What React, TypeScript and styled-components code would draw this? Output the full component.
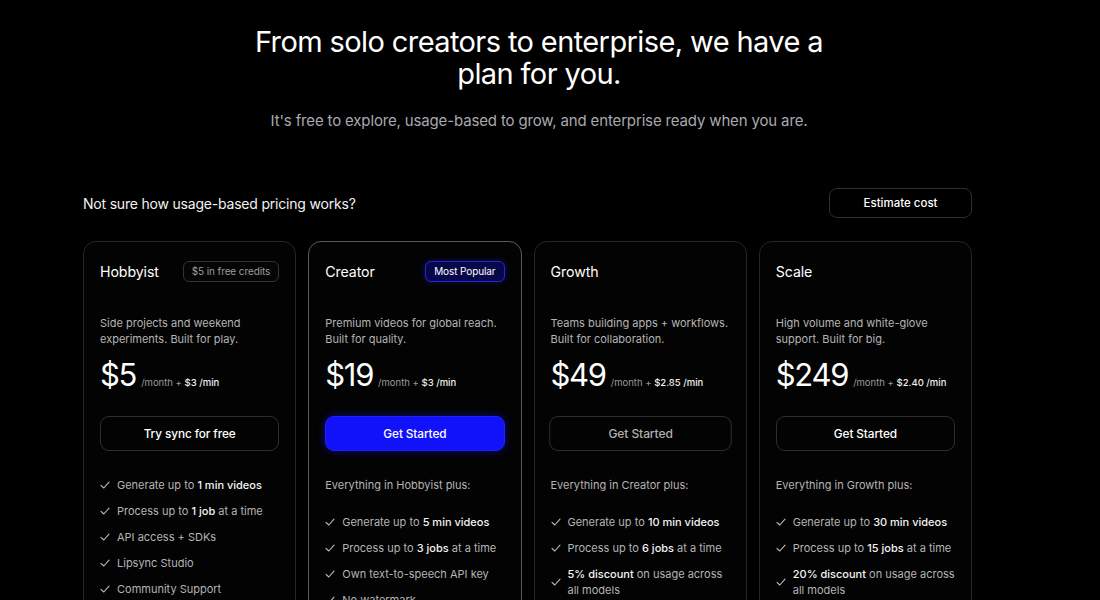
import React from "react";
import styled, { createGlobalStyle } from "styled-components";

const Global = createGlobalStyle`
  html, body { margin: 0; padding: 0; background: #000; }
  body { font-family: Inter, "Noto Sans", sans-serif; color: #fff; -webkit-font-smoothing: antialiased; }
  * { box-sizing: border-box; }
`;

const Page = styled.div`
  width: 1100px;
  height: 600px;
  overflow: hidden;
  background: #000;
  padding: 26px 22px 0 0;
  display: flex;
  flex-direction: column;
  align-items: center;
`;

const Title = styled.h1`
  margin: 0;
  width: 620px;
  text-align: center;
  font-size: 29px;
  line-height: 32px;
  font-weight: 400;
  letter-spacing: -0.6px;
  color: #fff;
`;

const Subtitle = styled.p`
  margin: 21px 0 0;
  font-size: 15px;
  line-height: 20px;
  color: #a9a9b0;
  letter-spacing: -0.15px;
`;

const Section = styled.div`
  align-self: flex-start;
  margin-left: 83px;
  width: 889px;
  margin-top: 57px;
  display: flex;
  flex-direction: column;
  gap: 23px;
`;

const Toolbar = styled.div`
  display: flex;
  align-items: center;
  justify-content: space-between;
`;

const Question = styled.span`
  font-size: 14px;
  color: #f2f2f2;
  letter-spacing: -0.2px;
`;

const OutlineButton = styled.button`
  height: 30px;
  width: 143px;
  border-radius: 8px;
  border: 1px solid #2e2e2e;
  background: #000;
  color: #fff;
  font-family: inherit;
  font-size: 11.5px;
  font-weight: 500;
`;

const Grid = styled.div`
  display: grid;
  grid-template-columns: repeat(4, 1fr);
  gap: 12px;
`;

const Card = styled.div<{ $featured?: boolean }>`
  height: 380px;
  border-radius: 13px;
  border: 1px solid ${(p) => (p.$featured ? "#5a5a5a" : "#262626")};
  background: #030303;
  padding: 18px 16px 0;
  display: flex;
  flex-direction: column;
`;

const CardHead = styled.div`
  display: flex;
  justify-content: space-between;
  align-items: center;
  height: 22px;
`;

const PlanName = styled.span`
  font-size: 14.2px;
  color: #fff;
  letter-spacing: -0.1px;
`;

const Badge = styled.span<{ $blue?: boolean }>`
  height: 21px;
  padding: 0 8px;
  display: inline-flex;
  align-items: center;
  border-radius: 6px;
  font-size: 10px;
  letter-spacing: -0.1px;
  border: 1px solid ${(p) => (p.$blue ? "#2626d8" : "#333")};
  background: ${(p) => (p.$blue ? "#07074a" : "#050505")};
  color: ${(p) => (p.$blue ? "#fff" : "#9c9c9c")};
  box-shadow: ${(p) => (p.$blue ? "0 0 6px rgba(40,40,255,0.35)" : "none")};
`;

const Desc = styled.p`
  margin: 33px 0 0;
  font-size: 11px;
  line-height: 16px;
  color: #b4b4b4;
  height: 32px;
`;

const PriceRow = styled.div`
  margin-top: 10px;
  display: flex;
  align-items: baseline;
  gap: 5px;
  height: 36px;
`;

const Amount = styled.span`
  font-size: 31px;
  line-height: 36px;
  font-weight: 400;
  letter-spacing: -1.3px;
`;

const Rate = styled.span`
  font-size: 9.5px;
  color: #9a9a9a;
  b { color: #eee; font-weight: 500; }
`;

const CTA = styled.button<{ $variant: "primary" | "ghost" | "hover" }>`
  margin-top: 23px;
  height: 35px;
  width: 100%;
  border-radius: 9px;
  font-family: inherit;
  font-size: 11.8px;
  font-weight: 500;
  letter-spacing: -0.1px;
  border: 1px solid ${(p) => (p.$variant === "primary" ? "#2020ff" : "#2e2e2e")};
  background: ${(p) => (p.$variant === "primary" ? "#1111fa" : "#030303")};
  color: ${(p) => (p.$variant === "hover" ? "#b0b0b0" : "#fff")};
  box-shadow: ${(p) => (p.$variant === "primary" ? "0 0 10px rgba(20,20,255,0.45)" : "none")};
  transform: ${(p) => (p.$variant === "hover" ? "scaleX(1.02)" : "none")};
`;

const Intro = styled.p`
  margin: 26px 0 0;
  font-size: 11px;
  line-height: 16px;
  color: #b4b4b4;
`;

const List = styled.ul<{ $afterIntro?: boolean }>`
  list-style: none;
  margin: ${(p) => (p.$afterIntro ? "21px" : "26px")} 0 0;
  padding: 0;
  display: flex;
  flex-direction: column;
  gap: 10px;
`;

const Item = styled.li`
  display: flex;
  align-items: center;
  gap: 7px;
  font-size: 11px;
  line-height: 16px;
  color: #b4b4b4;
  b { color: #f4f4f4; font-weight: 500; }
  svg { flex: none; }
`;

const ItemText = styled.span<{ $wrap?: boolean }>`
  max-width: ${(p) => (p.$wrap ? "166px" : "none")};
`;

const Check = () => (
  <svg width="10" height="10" viewBox="0 0 10 10" fill="none">
    <path d="M1 5.3 L3.8 8 L9 2.2" stroke="#bdbdbd" strokeWidth="1.1" strokeLinecap="round" strokeLinejoin="round" />
  </svg>
);

type Feature = { content: React.ReactNode; wrap?: boolean };

type Plan = {
  name: string;
  badge?: string;
  blue?: boolean;
  featured?: boolean;
  desc: string;
  price: string;
  monthly: string;
  cta: string;
  variant: "primary" | "ghost" | "hover";
  intro?: string;
  items: Feature[];
};

const plans: Plan[] = [
  {
    name: "Hobbyist",
    badge: "$5 in free credits",
    desc: "Side projects and weekend experiments. Built for play.",
    price: "$5",
    monthly: "$3 /min",
    cta: "Try sync for free",
    variant: "ghost",
    items: [
      { content: <>Generate up to <b>1 min videos</b></> },
      { content: <>Process up to <b>1 job</b> at a time</> },
      { content: <>API access + SDKs</> },
      { content: <>Lipsync Studio</> },
      { content: <>Community Support</> },
    ],
  },
  {
    name: "Creator",
    badge: "Most Popular",
    blue: true,
    featured: true,
    desc: "Premium videos for global reach. Built for quality.",
    price: "$19",
    monthly: "$3 /min",
    cta: "Get Started",
    variant: "primary",
    intro: "Everything in Hobbyist plus:",
    items: [
      { content: <>Generate up to <b>5 min videos</b></> },
      { content: <>Process up to <b>3 jobs</b> at a time</> },
      { content: <>Own text-to-speech API key</> },
      { content: <>No watermark</> },
    ],
  },
  {
    name: "Growth",
    desc: "Teams building apps + workflows. Built for collaboration.",
    price: "$49",
    monthly: "$2.85 /min",
    cta: "Get Started",
    variant: "hover",
    intro: "Everything in Creator plus:",
    items: [
      { content: <>Generate up to <b>10 min videos</b></> },
      { content: <>Process up to <b>6 jobs</b> at a time</> },
      { content: <><b>5% discount</b> on usage across all models</>, wrap: true },
    ],
  },
  {
    name: "Scale",
    desc: "High volume and white-glove support. Built for big.",
    price: "$249",
    monthly: "$2.40 /min",
    cta: "Get Started",
    variant: "ghost",
    intro: "Everything in Growth plus:",
    items: [
      { content: <>Generate up to <b>30 min videos</b></> },
      { content: <>Process up to <b>15 jobs</b> at a time</> },
      { content: <><b>20% discount</b> on usage across all models</>, wrap: true },
    ],
  },
];

export default function App() {
  return (
    <>
      <Global />
      <Page>
        <Title>From solo creators to enterprise, we have a plan for you.</Title>
        <Subtitle>It's free to explore, usage-based to grow, and enterprise ready when you are.</Subtitle>
        <Section>
          <Toolbar>
            <Question>Not sure how usage-based pricing works?</Question>
            <OutlineButton>Estimate cost</OutlineButton>
          </Toolbar>
          <Grid>
            {plans.map((p) => (
              <Card key={p.name} $featured={p.featured}>
                <CardHead>
                  <PlanName>{p.name}</PlanName>
                  {p.badge && <Badge $blue={p.blue}>{p.badge}</Badge>}
                </CardHead>
                <Desc>{p.desc}</Desc>
                <PriceRow>
                  <Amount>{p.price}</Amount>
                  <Rate>
                    /month + <b>{p.monthly}</b>
                  </Rate>
                </PriceRow>
                <CTA $variant={p.variant}>{p.cta}</CTA>
                {p.intro && <Intro>{p.intro}</Intro>}
                <List $afterIntro={!!p.intro}>
                  {p.items.map((it, i) => (
                    <Item key={i}>
                      <Check />
                      <ItemText $wrap={it.wrap}>{it.content}</ItemText>
                    </Item>
                  ))}
                </List>
              </Card>
            ))}
          </Grid>
        </Section>
      </Page>
    </>
  );
}
